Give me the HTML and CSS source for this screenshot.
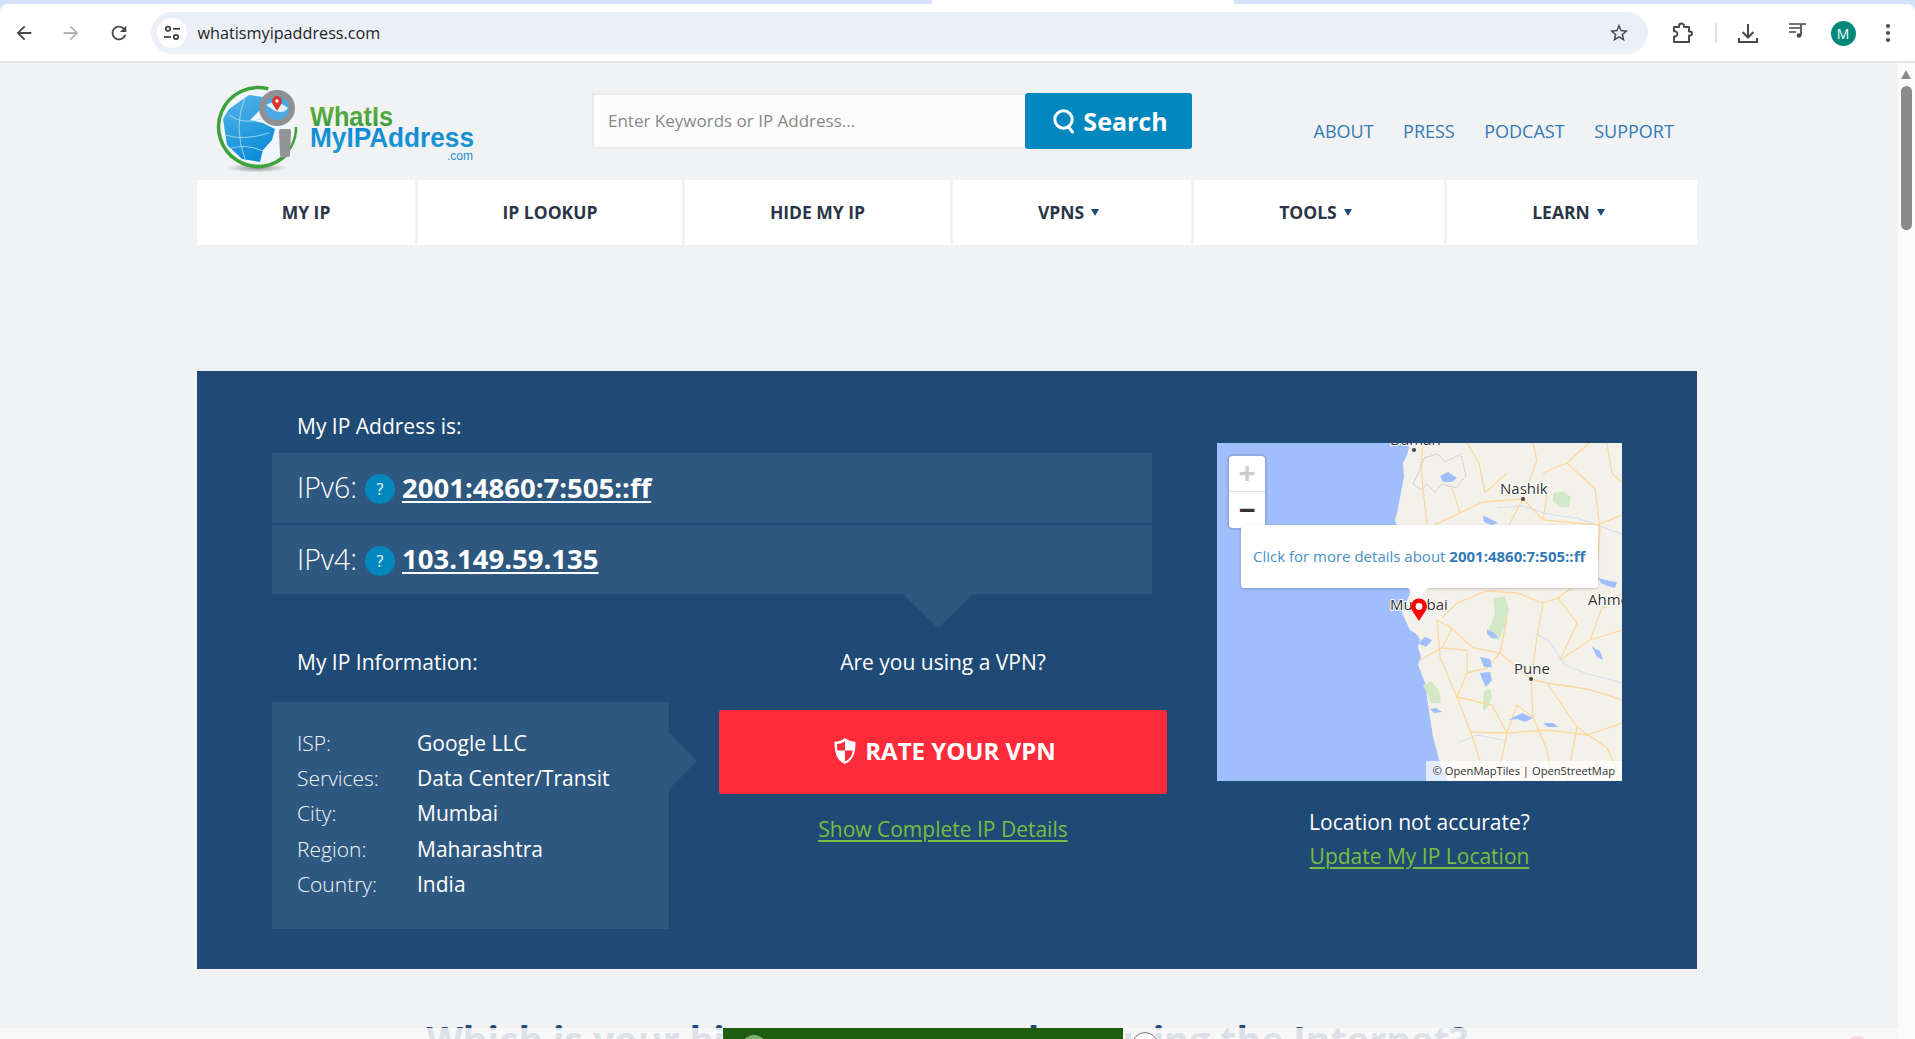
FILE: index.html
```html
<!DOCTYPE html>
<html lang="en">
  <head>
    <meta charset="UTF-8" />
    <meta name="viewport" content="width=device-width, initial-scale=1.0" />
    <title>What Is My IP Address</title>
    <link rel="stylesheet" href="styles.css">
  </head>
  <body>
    <div class="chrome">
      <div class="tabstrip">
        <span class="tab-left"></span>
        <span class="tab-active"></span>
        <span class="tab-right"></span>
      </div>
      <div class="toolbar">
        <span class="tool-btn">
          <svg width="22" height="22" viewBox="0 0 24 24" fill="#474747"><path d="M20 11H7.83l5.59-5.59L12 4l-8 8 8 8 1.41-1.41L7.83 13H20v-2z"/></svg>
        </span>
        <span class="tool-btn">
          <svg width="22" height="22" viewBox="0 0 24 24" fill="#b4b4b4"><path d="M12 4l-1.41 1.41L16.17 11H4v2h12.17l-5.58 5.59L12 20l8-8z"/></svg>
        </span>
        <span class="tool-btn">
          <svg width="22" height="22" viewBox="0 0 24 24" fill="#474747"><path d="M17.65 6.35A7.96 7.96 0 0 0 12 4c-4.42 0-7.99 3.58-7.99 8s3.57 8 7.99 8c3.73 0 6.84-2.55 7.73-6h-2.08A5.99 5.99 0 0 1 12 18c-3.31 0-6-2.69-6-6s2.69-6 6-6c1.66 0 3.14.69 4.22 1.78L13 11h7V4l-2.35 2.35z"/></svg>
        </span>
        <div class="omnibox">
          <span class="site-chip">
            <svg width="18" height="18" viewBox="0 0 18 18" fill="none" stroke="#3c3c3c" stroke-width="1.7"><circle cx="5" cy="4.8" r="2.2"/><path d="M10 4.8h7"/><circle cx="13" cy="13" r="2.2"/><path d="M1 13h7"/></svg>
          </span>
          <span class="url">whatismyipaddress.com</span>
          <svg class="star" width="22" height="22" viewBox="0 0 24 24" fill="#474747"><path d="M22 9.24l-7.19-.62L12 2 9.19 8.63 2 9.24l5.46 4.73L5.82 21 12 17.27 18.18 21l-1.63-7.03L22 9.24zM12 15.4l-3.76 2.27 1-4.28-3.32-2.88 4.38-.38L12 6.1l1.71 4.04 4.38.38-3.32 2.88 1 4.28L12 15.4z"/></svg>
        </div>
        <div class="tool-right">
          <svg class="ext-icon" width="22" height="22" viewBox="0 0 22 22" fill="none" stroke="#474747" stroke-width="1.9" stroke-linejoin="round"><path d="M3 5h5V4a2.5 2.5 0 0 1 5 0v1h5v4.5h1a2 2 0 0 1 0 4h-1V20H3v-5.500h1.500a2.700 2.700 0 0 0 0-5.200H3z"/></svg>
          <span class="tool-divider"></span>
          <svg class="dl-icon" width="22" height="22" viewBox="0 0 22 22" fill="none" stroke="#474747" stroke-width="2"><path d="M11 2v13M5.500 10l5.500 5.500 5.500-5.500M2 16v4h18v-4"/></svg>
          <svg class="media-icon" width="20" height="20" viewBox="0 0 20 20" fill="none" stroke="#474747" stroke-width="1.7"><path d="M1 3h11M1 7h11M1 11h7M13 14.500V3h5"/><circle cx="11" cy="14.500" r="2.300" fill="#474747" stroke="none"/></svg>
          <span class="avatar">M</span>
          <svg class="dots-icon" width="6" height="20" viewBox="0 0 6 20" fill="#474747"><circle cx="3" cy="3" r="2"/><circle cx="3" cy="10" r="2"/><circle cx="3" cy="17" r="2"/></svg>
        </div>
      </div>
    </div>

    <div class="viewport">
      <div class="page">
        <header class="site-header">
          <a class="logo" href="#">
            <svg width="280" height="94" viewBox="0 0 280 94">
              <defs>
                <linearGradient id="oceanFill" x1="0" y1="0" x2="0.4" y2="1">
                  <stop offset="0" stop-color="#58b6ea"/>
                  <stop offset="1" stop-color="#0f8ed8"/>
                </linearGradient>
                <radialGradient id="logoShadow">
                  <stop offset="0" stop-color="#8d8f90"/>
                  <stop offset="1" stop-color="#f1f2f4"/>
                </radialGradient>
                <linearGradient id="greenText" x1="0" y1="0" x2="0" y2="1">
                  <stop offset="0" stop-color="#6db53c"/>
                  <stop offset="1" stop-color="#2c9a3e"/>
                </linearGradient>
                <linearGradient id="blueText" x1="0" y1="0" x2="0" y2="1">
                  <stop offset="0" stop-color="#0c84cf"/>
                  <stop offset="1" stop-color="#1c9ad8"/>
                </linearGradient>
              </defs>
              <ellipse cx="42" cy="85" rx="30" ry="4.500" fill="url(#logoShadow)"/>
              <circle cx="43" cy="44" r="36" fill="#eff7fc"/>
              <path d="M8 36L14 26 34 12 48 14 45 27 38 34 35 37 48 40 60 46 57 57 48 67 45 79 27 76 12 62z" fill="url(#oceanFill)"/>
              <path d="M10 52q18 6 44-2M14 32q14 10 32 4M30 14q-12 30 0 62M14 66q16-6 34 2" fill="none" stroke="#b5def5" stroke-width="0.8"/>
              <path d="M73.300 69.400A39.500 39.500 0 1 1 53.200 5.800" fill="none" stroke="#3ea23c" stroke-width="3.500"/>
              <path d="M81 44A38 38 0 0 1 62 78" fill="none" stroke="#3ea23c" stroke-width="2.500"/>
              <circle cx="62" cy="25" r="15" fill="#4aa9e2" stroke="#8f9092" stroke-width="6"/>
              <path d="M51 22q10-6 22 3-4 6-13 3z" fill="#dff1fb"/>
              <path d="M66 46h8q2 0 2 2l-1 24q0 2-3 2h-4q-3 0-3-2l-1-24q0-2 2-2z" fill="#939495"/>
              <path d="M62 28c-3-5-5-7-5-10a5 5 0 0 1 10 0c0 3-2 5-5 10z" fill="#d9352a"/>
              <circle cx="62" cy="18" r="1.700" fill="#fff"/>
              <text class="logo-word" x="95" y="43" textLength="83" lengthAdjust="spacingAndGlyphs" fill="url(#greenText)">WhatIs</text>
              <text class="logo-word" x="95" y="64" textLength="164" lengthAdjust="spacingAndGlyphs" fill="url(#blueText)">MyIPAddress</text>
              <text class="logo-com" x="232" y="77" textLength="26" lengthAdjust="spacingAndGlyphs" fill="#1a8fd2">.com</text>
            </svg>
          </a>
          <form class="search-form" onsubmit="return false">
            <input class="search-input" type="text" placeholder="Enter Keywords or IP Address..." />
            <button class="search-btn" type="submit">
              <svg width="24" height="26" viewBox="0 0 24 26" fill="none" stroke="#fff" stroke-width="3" stroke-linecap="round"><circle cx="11.500" cy="11.500" r="8.700"/><path d="M16.500 19l4 5"/></svg>
              Search
            </button>
          </form>
          <nav class="top-links">
            <a href="#">ABOUT</a>
            <a href="#">PRESS</a>
            <a href="#">PODCAST</a>
            <a href="#">SUPPORT</a>
          </nav>
        </header>

        <nav class="main-nav">
          <a class="nav-cell nav-myip" href="#">MY IP</a>
          <a class="nav-cell nav-lookup" href="#">IP LOOKUP</a>
          <a class="nav-cell nav-hide" href="#">HIDE MY IP</a>
          <a class="nav-cell nav-drop nav-vpns" href="#">VPNS<span class="caret"></span></a>
          <a class="nav-cell nav-drop nav-tools" href="#">TOOLS<span class="caret"></span></a>
          <a class="nav-cell nav-drop nav-learn" href="#">LEARN<span class="caret"></span></a>
        </nav>

        <section class="ip-panel">
          <div class="ip-left">
            <h2 class="ip-title">My IP Address is:</h2>
            <div class="ip-rows">
              <div class="ip-row">
                <span class="ip-label">IPv6:</span>
                <span class="help">?</span>
                <a class="ip-value" href="#">2001:4860:7:505::ff</a>
              </div>
              <div class="ip-row ip-row-last">
                <span class="ip-label">IPv4:</span>
                <span class="help">?</span>
                <a class="ip-value" href="#">103.149.59.135</a>
              </div>
            </div>
            <div class="ip-lower">
              <div class="info-col">
                <h3 class="info-title">My IP Information:</h3>
                <div class="info-box">
                  <span class="info-key">ISP:</span><span class="info-val">Google LLC</span>
                  <span class="info-key">Services:</span><span class="info-val">Data Center/Transit</span>
                  <span class="info-key">City:</span><span class="info-val">Mumbai</span>
                  <span class="info-key">Region:</span><span class="info-val">Maharashtra</span>
                  <span class="info-key">Country:</span><span class="info-val">India</span>
                </div>
              </div>
              <div class="vpn-col">
                <h3 class="vpn-title">Are you using a VPN?</h3>
                <a class="vpn-btn" href="#">
                  <svg width="24" height="28" viewBox="0 0 24 28"><path d="M12 1c3 2.500 6.500 3.500 10.500 3.700 0 11-2 18.300-10.500 22.300C3.500 23 1.500 15.700 1.500 4.700 5.500 4.500 9 3.500 12 1z" fill="#fff"/><path d="M12 4.200v9.300h7.700c-.6 5-2.800 8.900-7.700 10.800v-10.800H4.300c-.2-2-.3-4-.3-6.500 3-.3 5.600-1.200 8-2.800z" fill="#ff2b3b"/></svg>
                  RATE YOUR VPN
                </a>
                <a class="green-link details-link" href="#">Show Complete IP Details</a>
              </div>
            </div>
          </div>

          <div class="ip-right">
            <div class="map">
              <svg class="map-art" width="405" height="338" viewBox="0 0 405 338">
                <rect width="405" height="338" fill="#a0bdfc"/>
                <path d="M193 0L190 12 186 20 187 34 183 54 181 66 178 77 186 100 190 130 193 150 185 170 193 187 198 190 203 196 201 204 204 214 201 222 203 227 208 240 210 254 212 268 213 274 216 294 223 320 231 338H405V0z" fill="#f4f1ea"/>
                <g class="map-green">
                  <path d="M336 50l10-2 8 6-2 10-10 0-6-6z"/>
                  <path d="M276 155l12-2 4 14-4 16-6 14-8-2-2-10 6-14z"/>
                  <path d="M267 248l6-2 2 8-4 10-5 4 0-10z"/>
                  <path d="M206 242l8-4 8 10 2 12-10 0z"/>
                </g>
                <g class="map-river">
                  <path d="M280 65l26-2 24 8 30 4 45 16M318 190l14 8 16 24 20 8 37 10M290 318l20 8 14 12M240 300l20-8 30 6"/>
                </g>
                <g class="roads">
                  <path d="M306 56L266 59 243 70 213 84M306 56L293 80 288 110M306 56L326 77 380 82 405 72M306 56L320 17 316 0M326 30L350 20 372 0"/>
                  <path d="M206 0L204 20 206 47 210 80M250 0L262 20 268 50M390 0L395 30 405 40"/>
                  <path d="M314 236L330 240 370 246 405 257M314 236L283 210 256 205 233 184 220 177"/>
                  <path d="M314 236L320 194 326 160 341 155 380 127 383 87M314 236L316 274 330 307 336 338"/>
                  <path d="M220 177L223 214 240 254 253 287 262 315 270 338M203 217L225 205 250 207 250 230 240 254"/>
                  <path d="M253 289L290 290 330 287 370 292 405 280M343 217L373 197 405 187M330 240L360 284 350 338"/>
                  <path d="M326 160L300 150 270 148 240 160 225 175M341 155L360 180 343 217M283 210L290 175"/>
                  <path d="M240 254L275 262 290 290 280 338M360 284L390 305 405 338M373 197L385 165 405 150"/>
                  <path d="M350 20L378 46 383 87M326 77L330 52M243 70L235 45M268 50L290 30"/>
                  <path d="M225 205L235 185M250 230L270 225 283 210M290 290L300 262 316 274"/>
                </g>
                <path class="map-border" d="M207 15l14-4 7 8 16-8 5 22-10 12-14-4-7 8-8-8-6 6-8-6 6-12z"/>
                <g class="map-water">
                  <path d="M223 33l8-4 9 6-5 4-9 0z"/>
                  <path d="M266 73l6 2 9 5-6 2-8-3z"/>
                  <path d="M270 186l7 4 4 5-6 0-5-4z"/>
                  <path d="M263 214l10 2 2 8-8 0z"/>
                  <path d="M263 230l10-1 2 8-6 7-4-8z"/>
                  <path d="M291 277l14-7 11 5-8 4-8-3z"/>
                  <path d="M326 280l10 0 5 4-10 0z"/>
                  <path d="M375 204l8 4 3 9-6-3z"/>
                  <path d="M381 135l12 3 7 1-2 6-8-2-6-3z"/>
                  <path d="M201 200l7-6 7 3-6 7z"/>
                  <path d="M213 266l6-1 6 4-8 1z"/>
                </g>
                <circle cx="197" cy="7" r="2" fill="#444"/>
                <circle cx="306" cy="56" r="2" fill="#444"/>
                <circle cx="314" cy="236" r="2" fill="#444"/>
                <text class="map-label" x="173" y="2">Daman</text>
                <text class="map-label" x="283" y="51">Nashik</text>
                <text class="map-label" x="173" y="167">Mumbai</text>
                <text class="map-label" x="371" y="162">Ahmedabad</text>
                <text class="map-label" x="297" y="231">Pune</text>
              </svg>
              <div class="zoom-ctl">
                <span class="zoom-btn zoom-in">+</span>
                <span class="zoom-btn zoom-out">&minus;</span>
              </div>
              <div class="popup">Click for more details about <b>2001:4860:7:505::ff</b></div>
              <svg class="pin" width="18" height="24" viewBox="0 0 18 24"><path d="M9 23C4 15 1 12 1 8.500a8 8 0 0 1 16 0C17 12 14 15 9 23z" fill="#f00"/><circle cx="9" cy="8.500" r="3.400" fill="#fff"/></svg>
              <div class="attrib">&copy; OpenMapTiles | OpenStreetMap</div>
            </div>
            <p class="loc-note">Location not accurate?</p>
            <a class="green-link" href="#">Update My IP Location</a>
          </div>
        </section>

        <h2 class="poll-title">Which is your biggest concern when using the Internet?</h2>
      </div>

      <div class="scrollbar">
        <span class="scroll-arrow"></span>
        <span class="scroll-thumb"></span>
      </div>

      <div class="bottom-ad">
        <div class="ad-green"><span class="ad-ring"></span></div>
        <span class="ad-radio"></span>
        <span class="ad-close"></span>
      </div>
    </div>
  </body>
</html>
```
FILE: styles.css
```css
* {
  box-sizing: border-box;
}

html,
body {
  margin: 0;
  height: 100%;
  overflow: hidden;
}

body {
  font-family: "Open Sans", Arial, sans-serif;
  background: #f1f2f4;
  display: flex;
  flex-direction: column;
}

a {
  text-decoration: none;
}

/* browser bar */
.chrome {
  background: #d3e3fd;
  flex: none;
}

.tabstrip {
  display: flex;
  height: 4px;
}

.tab-left {
  width: 932px;
}

.tab-active {
  width: 302px;
  background: #fff;
}

.toolbar {
  display: flex;
  align-items: center;
  height: 59px;
  padding: 1px 0 0 0;
  background: #fff;
  border-bottom: 2px solid #e4e4e4;
  border-radius: 8px 8px 0 0;
}

.tool-btn {
  width: 47.5px;
  display: flex;
  justify-content: center;
}

.omnibox {
  width: 1497px;
  height: 42px;
  margin-left: 8px;
  padding: 0 11px 0 6px;
  display: flex;
  align-items: center;
  background: #ebf0f8;
  border-radius: 21px;
}

.site-chip {
  width: 30px;
  height: 30px;
  border-radius: 50%;
  background: #fff;
  display: flex;
  align-items: center;
  justify-content: center;
  margin-right: 11px;
}

.url {
  flex: 1;
  font-size: 16.2px;
  color: #1f1f1f;
}

.star {
  margin-right: 7px;
}

.tool-right {
  display: flex;
  align-items: center;
  margin-left: 23px;
}

.tool-divider {
  width: 2px;
  height: 20px;
  background: #d3e3fd;
  margin: 0 20px 0 22px;
}

.media-icon {
  margin: -4px 0 0 29px;
}

.avatar {
  width: 25px;
  height: 25px;
  margin-left: 23px;
  border-radius: 50%;
  background: #00897b;
  color: #fff;
  font-size: 14px;
  line-height: 25px;
  text-align: center;
}

.dots-icon {
  margin-left: 29px;
}

/* page */
.viewport {
  position: relative;
  flex: 1;
  display: flex;
  min-height: 0;
  overflow: hidden;
}

.page {
  width: 1898px;
  padding-left: 197px;
  flex: none;
}

.site-header {
  width: 1500px;
  height: 117px;
  display: flex;
}

.logo {
  width: 395px;
  padding: 20px 0 0 18px;
}

.logo-word {
  font-family: "Liberation Sans", Arial, sans-serif;
  font-weight: bold;
  font-size: 28px;
}

.logo-com {
  font-family: "Liberation Sans", Arial, sans-serif;
  font-size: 12px;
}

.search-form {
  display: flex;
  width: 600px;
  height: 56px;
  margin-top: 30px;
}

.search-input {
  width: 433px;
  height: 56px;
  padding: 0 14px 2px;
  background: #fcfcfc;
  border: 2px solid #eaeaea;
  border-right: none;
  font-family: "Open Sans", Arial, sans-serif;
  font-size: 17px;
  outline: none;
}

.search-input::placeholder {
  color: #888;
  opacity: 1;
}

.search-btn {
  width: 167px;
  height: 56px;
  padding: 0 0 0 3px;
  display: flex;
  align-items: center;
  justify-content: center;
  gap: 7px;
  background: #0288bf;
  color: #fff;
  border: none;
  border-radius: 3px;
  font-family: "Open Sans", Arial, sans-serif;
  font-weight: bold;
  font-size: 25px;
  cursor: pointer;
}

.top-links {
  display: flex;
  gap: 29.500px;
  margin: 55px 0 0 121.500px;
  font-size: 18px;
  line-height: 26px;
}

.top-links a {
  color: #337ab7;
}

.main-nav {
  display: flex;
  width: 1500px;
  height: 65px;
  gap: 3px;
}

.nav-cell {
  display: flex;
  align-items: center;
  justify-content: center;
  padding-bottom: 2px;
  background: #fff;
  color: #2a3547;
  font-weight: bold;
  font-size: 17.5px;
}

.nav-drop {
  padding-right: 7px;
}

.nav-myip {
  width: 218px;
}

.nav-lookup {
  width: 264px;
}

.nav-hide {
  width: 265px;
}

.nav-vpns {
  width: 238px;
}

.nav-tools {
  width: 250px;
}

.nav-learn {
  width: 250px;
}

.caret {
  margin: 2px 0 0 7px;
  border-style: solid;
  border-width: 7px 4px 0;
  border-color: #1f4a75 transparent transparent;
}

/* main panel */
.ip-panel {
  width: 1500px;
  height: 598px;
  margin-top: 126px;
  padding: 40px 75px 0;
  display: flex;
  gap: 50px;
  background: #1f4a75;
  color: #fff;
}

.ip-left {
  width: 895px;
  flex: none;
}

.ip-title,
.info-title,
.vpn-title {
  margin: 0;
  font-weight: normal;
  font-size: 21px;
  line-height: 30px;
}

.ip-title {
  padding-left: 25px;
  margin-bottom: 12px;
}

.ip-rows {
  position: relative;
  width: 880px;
  display: flex;
  flex-direction: column;
  gap: 2px;
}

.ip-rows::after {
  content: "";
  position: absolute;
  left: 631px;
  top: 100%;
  border-style: solid;
  border-width: 34px 35px 0;
  border-color: #2e587f transparent transparent;
}

.ip-row {
  height: 70px;
  padding: 0 0 2px 25px;
  display: flex;
  align-items: center;
  background: #2e587f;
}

.ip-row-last {
  height: 69px;
}

.ip-label {
  font-size: 28.500px;
  font-weight: 300;
}

.help {
  width: 30px;
  height: 30px;
  margin: 4px 7px 0 8px;
  border-radius: 50%;
  background: #0288bf;
  font-size: 16px;
  line-height: 30px;
  text-align: center;
}

.ip-value {
  color: #fff;
  font-size: 27.500px;
  font-weight: bold;
  text-decoration: underline;
  text-decoration-thickness: 2px;
  text-underline-offset: 3px;
}

.ip-lower {
  display: flex;
  gap: 50px;
  margin-top: 53px;
}

.info-col {
  width: 397px;
}

.info-title {
  padding-left: 25px;
  margin-bottom: 25px;
}

.info-box {
  position: relative;
  height: 227px;
  padding: 23px 0 0 25px;
  display: grid;
  grid-template-columns: 120px 1fr;
  grid-auto-rows: 35.300px;
  align-items: center;
  background: #2e587f;
  font-size: 21px;
}

.info-box::after {
  content: "";
  position: absolute;
  left: 100%;
  top: 31px;
  border-style: solid;
  border-width: 28px 0 28px 28px;
  border-color: transparent transparent transparent #2e587f;
}

.info-key {
  font-weight: 300;
  color: #f2f7fb;
}

.vpn-col {
  width: 448px;
  text-align: center;
}

.vpn-title {
  margin-bottom: 33px;
}

.vpn-btn {
  height: 84px;
  padding: 0 0 3px 3px;
  display: flex;
  align-items: center;
  justify-content: center;
  gap: 8px;
  background: #ff2b3b;
  border-radius: 3px;
  color: #fff;
  font-size: 24px;
  font-weight: bold;
}

.green-link {
  color: #79bd41;
  font-size: 21px;
  line-height: 30px;
  text-decoration: underline;
  text-underline-offset: 3px;
}

.details-link {
  display: inline-block;
  margin-top: 20px;
}

.ip-right {
  width: 405px;
  padding-top: 32px;
  text-align: center;
}

.loc-note {
  margin: 26px 0 4px;
  font-size: 21px;
  line-height: 30px;
}

/* map */
.map {
  position: relative;
  width: 405px;
  height: 338px;
  overflow: hidden;
  text-align: left;
}

.map-art {
  display: block;
}

.roads path {
  fill: none;
  stroke: #fbd89e;
  stroke-width: 1.300;
}

.map-border {
  fill: none;
  stroke: #b9b9b4;
  stroke-width: 0.800;
  stroke-dasharray: 2 1;
}

.map-water path {
  fill: #a0bdfc;
}

.map-green path {
  fill: #d3e8c6;
}

.map-river path {
  fill: none;
  stroke: #cfdcf6;
  stroke-width: 1;
}

.map-label {
  font-family: "Open Sans", Arial, sans-serif;
  font-size: 15px;
  fill: #333;
  stroke: #fff;
  stroke-width: 2px;
  paint-order: stroke;
}

.zoom-ctl {
  position: absolute;
  left: 12px;
  top: 13px;
  width: 36px;
  border-radius: 4px;
  background: #fff;
  box-shadow: 0 0 0 2px rgba(0, 0, 0, 0.1);
}

.zoom-btn {
  display: block;
  height: 36px;
  font-size: 30px;
  font-weight: bold;
  line-height: 34px;
  text-align: center;
}

.zoom-in {
  color: #ccc;
  border-bottom: 1px solid #ddd;
}

.zoom-out {
  color: #333;
  line-height: 36px;
}

.popup {
  position: absolute;
  left: 24px;
  top: 82px;
  width: 357px;
  height: 63px;
  padding-left: 12px;
  background: #fff;
  border-radius: 3px;
  box-shadow: 0 1px 3px rgba(0, 0, 0, 0.2);
  color: #4a8fc4;
  font-size: 15px;
  line-height: 62px;
  white-space: nowrap;
}

.popup b {
  color: #337ab7;
}

.popup::after {
  content: "";
  position: absolute;
  left: 167px;
  top: 100%;
  border-style: solid;
  border-width: 10px 10px 0;
  border-color: #fff transparent transparent;
}

.pin {
  position: absolute;
  left: 193px;
  top: 155px;
}

.attrib {
  position: absolute;
  right: 0;
  bottom: 0;
  height: 20px;
  padding: 0 7px;
  background: rgba(255, 255, 255, 0.7);
  color: #333;
  font-size: 11.200px;
  line-height: 20px;
}

.poll-title {
  width: 1500px;
  margin: 47px 0 0;
  color: #1f4a75;
  font-size: 37.700px;
  line-height: 48px;
  text-align: center;
  white-space: nowrap;
}

/* fake scrollbar */
.scrollbar {
  flex: none;
  width: 17px;
  background: #fbfbfb;
  padding: 7px 0 0 3px;
}

.scroll-arrow {
  display: block;
  width: 0;
  border-style: solid;
  border-width: 0 5.500px 9px;
  border-color: transparent transparent #8a8a8a;
}

.scroll-thumb {
  display: block;
  width: 11px;
  height: 144px;
  margin-top: 7px;
  border-radius: 6px;
  background: #8a8a8a;
}

/* sticky ad at the bottom */
.bottom-ad {
  position: absolute;
  left: 0;
  bottom: 0;
  width: 1898px;
  height: 11px;
  background: rgba(248, 248, 248, 0.87);
  overflow: hidden;
}

.ad-green {
  position: absolute;
  left: 723px;
  top: -1px;
  width: 400px;
  height: 13px;
  background: #1e5e10;
  overflow: hidden;
}

.ad-ring {
  position: absolute;
  left: 18px;
  top: 8px;
  width: 26px;
  height: 26px;
  border-radius: 50%;
  background: #fff;
  border: 5px solid #7fae72;
}

.ad-radio {
  position: absolute;
  left: 1132px;
  top: 4px;
  width: 26px;
  height: 26px;
  border-radius: 50%;
  background: #fff;
  border: 1px solid #777;
}

.ad-close {
  position: absolute;
  left: 1844px;
  top: 8px;
  width: 26px;
  height: 26px;
  border-radius: 50%;
  background: #fcd9dc;
}
```
